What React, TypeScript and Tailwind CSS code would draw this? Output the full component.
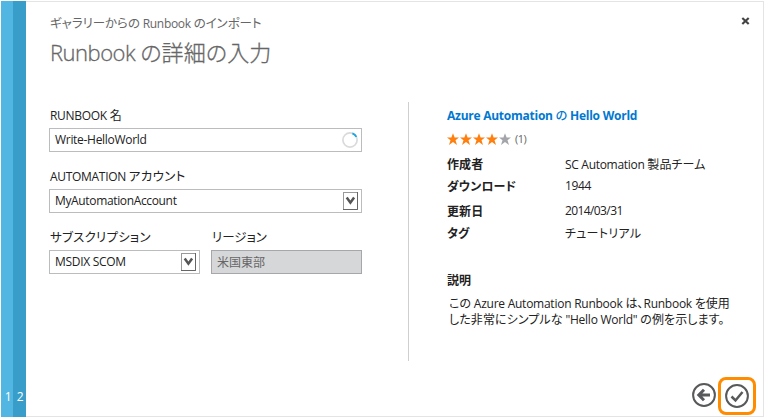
import React from "react";

function J({ children, className = "tracking-[0.1px]" }: { children: React.ReactNode; className?: string }) {
  return (
    <span className={`font-['Noto_Sans_CJK_JP',sans-serif] [font-feature-settings:'palt'] ${className}`}>
      {children}
    </span>
  );
}

function Chevron() {
  return (
    <svg width="15" height="18" viewBox="0 0 15 18" className="shrink-0">
      <rect x=".5" y=".5" width="14" height="17" fill="#fff" stroke="#999" />
      <path d="M14.500 0v17.500H0" fill="none" stroke="#666" />
      <path d="M3.700 5.500l3.700 5.200 3.700-5.200" fill="none" stroke="#555" strokeWidth="2.500" />
    </svg>
  );
}

function Spinner() {
  return (
    <svg width="16" height="16" viewBox="0 0 16 16" fill="none" className="shrink-0">
      <circle cx="8" cy="8" r="7.100" stroke="#d9dadb" strokeWidth="1.700" />
      <path d="M10.400 1.300a7.100 7.100 0 0 1 4 3.600" stroke="#1ba5e3" strokeWidth="1.900" />
    </svg>
  );
}

function Star({ className }: { className: string }) {
  return (
    <svg width="13" height="13" viewBox="0 0 13 13" className={className}>
      <path fill="currentColor" d="M6 .2l1.600 4.300H12L8.500 7.200l1.500 4.700L6 9.100l-4 2.800 1.500-4.700L0 4.500h4.400z" />
    </svg>
  );
}

function Label({ children }: { children: React.ReactNode }) {
  return <label className="block h-[21px] whitespace-nowrap pl-px">{children}</label>;
}

function Field({ children, className = "border-[#bbbcbd]" }: { children: React.ReactNode; className?: string }) {
  return (
    <div className={`flex h-6 items-center justify-between border pl-[5px] pr-[3px] ${className}`}>
      {children}
    </div>
  );
}

const rows = [
  { label: "作成者", height: "h-[22px]", value: <>SC Automation <J>製品チーム</J></> },
  { label: "ダウンロード", height: "h-[25px]", value: <span className="tracking-[-0.400px]">1944</span> },
  { label: "更新日", height: "h-[22px]", value: <span className="tracking-[-0.600px]">2014/03/31</span> },
  { label: "タグ", height: "h-[22px]", value: <J className="tracking-[0.300px]">チュートリアル</J> },
];

export default function App() {
  return (
    <div className="h-[418px] w-[765px] overflow-hidden bg-white pl-px pt-px font-['Open_Sans','Noto_Sans_CJK_JP',sans-serif] text-[12px] leading-[16px] tracking-[-0.3px] text-[#222]">
      <div className="flex h-[416px] w-[763px]">
        <div className="flex w-3 shrink-0 items-end justify-center bg-[#51b6e1] pb-3 pl-[2px] text-white">1</div>
        <div className="flex w-[13px] shrink-0 items-end justify-center bg-[#399dc9] pb-3 pl-px text-white">2</div>
        <div className="flex flex-1 flex-col border-y border-r border-[#e4e4e4] pl-[23px]">
          <header className="flex h-[100px] justify-between pr-[13px] pt-[11px] text-[#666]">
            <div className="whitespace-nowrap pl-px">
              <p className="h-5 leading-5">
                <J className="text-[12.500px] tracking-[-0.050px]">ギャラリーからの</J> Runbook <J className="text-[12.500px] tracking-[-0.050px]">のインポート</J>
              </p>
              <h1 className="mt-[2px] h-8 text-[22px] font-light leading-8 tracking-[-0.500px] text-[#666] [-webkit-text-stroke:0.3px_#666]">
                Runbook <J className="tracking-[0.100px]">の詳細の入力</J>
              </h1>
            </div>
            <svg width="9" height="8" viewBox="0 0 9 8" className="mt-[4px]">
              <path d="M1.300 1l6.400 6M7.700 1L1.300 7" stroke="#444" strokeWidth="2.200" />
            </svg>
          </header>
          <main className="flex h-[259px]">
            <form className="w-[313px] pt-[5px]">
              <Label>RUNBOOK <J>名</J></Label>
              <Field>Write-HelloWorld<Spinner /></Field>
              <div className="mt-4">
                <Label>AUTOMATION <J className="text-[12.500px] tracking-[0.300px]">アカウント</J></Label>
              </div>
              <Field><span className="tracking-[-0.350px]">MyAutomationAccount</span><Chevron /></Field>
              <div className="mt-4 flex gap-[11px]">
                <div className="w-[151px]">
                  <Label><J className="text-[12.500px] tracking-[0.200px]">サブスクリプション</J></Label>
                  <Field>MSDIX SCOM<Chevron /></Field>
                </div>
                <div className="w-[151px]">
                  <Label><J className="text-[12.500px] tracking-normal">リージョン</J></Label>
                  <Field className="border-[#a6a7aa] bg-[#d6d7d9] text-[#666]"><J className="tracking-normal">米国東部</J></Field>
                </div>
              </div>
            </form>
            <section className="ml-[46px] w-[330px] border-l border-[#cfcfcf] pl-[38px] pt-[5px]">
              <h2 className="h-4 whitespace-nowrap font-bold tracking-[-0.250px] text-[#0078d0]">
                Azure Automation <J className="font-medium tracking-normal">の</J> Hello World
              </h2>
              <div className="mt-[8px] flex h-4 items-center">
                <Star className="text-[#ff7f0e]" /><Star className="text-[#ff7f0e]" /><Star className="text-[#ff7f0e]" /><Star className="text-[#ff7f0e]" /><Star className="text-[#a3a5a8]" />
                <span className="ml-[3px] text-[11px] tracking-[-0.500px] text-[#666]">(1)</span>
              </div>
              <dl className="mt-[9px]">
                {rows.map((r) => (
                  <div key={r.label} className={`flex ${r.height}`}>
                    <dt className="w-[118px] font-bold"><J className="tracking-[0.100px]">{r.label}</J></dt>
                    <dd>{r.value}</dd>
                  </div>
                ))}
              </dl>
              <h3 className="mt-[25px] h-[23px] font-bold"><J>説明</J></h3>
              <div className="whitespace-nowrap pl-[2px] leading-[15px] tracking-[-0.250px]">
                <p><J className="tracking-normal">この</J> Azure Automation Runbook <J className="tracking-normal">は、</J>Runbook <J className="tracking-normal">を使用</J></p>
                <p><J>した非常にシンプルな</J> "Hello World" <J>の例を示します。</J></p>
              </div>
            </section>
          </main>
          <footer className="mt-[15px] flex justify-end gap-[2px] pr-[7px]">
            <svg width="24" height="24" viewBox="0 0 24 24" fill="none" stroke="#58595b" className="mt-[7px]">
              <circle cx="12" cy="12" r="10.900" strokeWidth="2" />
              <path d="M18 12H7M12 6.800L6.800 12l5.200 5.200" strokeWidth="3" />
            </svg>
            <div className="mt-px flex size-[38px] items-center justify-center rounded-[8px] border-[3px] border-[#ff8c00]">
              <svg width="24" height="24" viewBox="0 0 24 24" fill="none" stroke="#58595b" className="shrink-0">
                <circle cx="12" cy="12" r="10.900" strokeWidth="2" />
                <path d="M6.500 12.500l4 4L17.500 8" strokeWidth="2.500" />
              </svg>
            </div>
          </footer>
        </div>
      </div>
    </div>
  );
}
